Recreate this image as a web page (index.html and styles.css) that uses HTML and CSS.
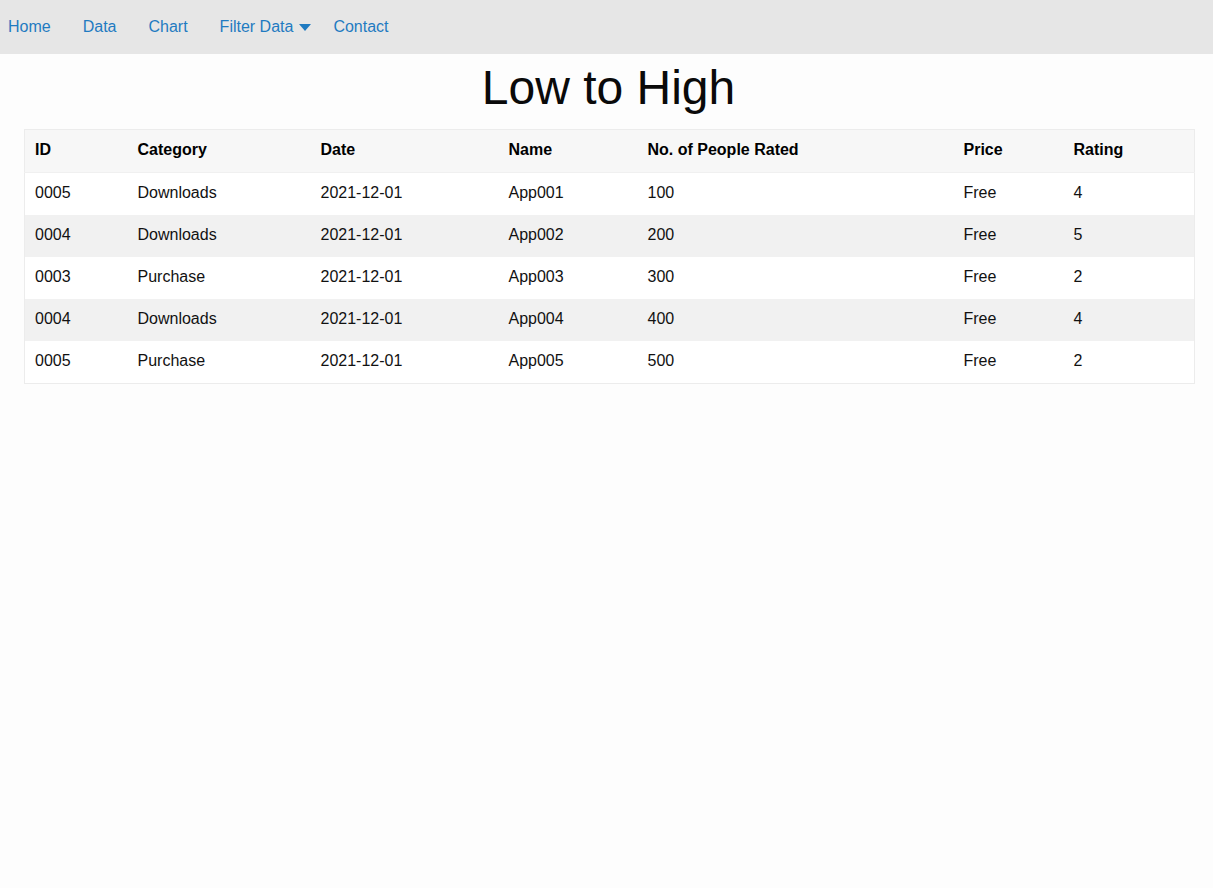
FILE: index.html
```html
<!DOCTYPE html>
<html>
<head>
<meta charset="utf-8">
<link rel="stylesheet" href="styles.css">
</head>
<body>
<nav class="nav">
  <a href="#">Home</a>
  <a href="#">Data</a>
  <a href="#">Chart</a>
  <a href="#" class="dropdown">Filter Data <span class="caret"></span></a>
  <a href="#">Contact</a>
</nav>
<h1 class="title">Low to High</h1>
<div class="wrap">
<table class="data">
  <colgroup>
    <col style="width:103px"><col style="width:183px"><col style="width:188px"><col style="width:139px"><col style="width:316px"><col style="width:110px"><col style="width:131px">
  </colgroup>
  <thead>
    <tr><th>ID</th><th>Category</th><th>Date</th><th>Name</th><th>No. of People Rated</th><th>Price</th><th>Rating</th></tr>
  </thead>
  <tbody>
    <tr><td>0005</td><td>Downloads</td><td>2021-12-01</td><td>App001</td><td>100</td><td>Free</td><td>4</td></tr>
    <tr><td>0004</td><td>Downloads</td><td>2021-12-01</td><td>App002</td><td>200</td><td>Free</td><td>5</td></tr>
    <tr><td>0003</td><td>Purchase</td><td>2021-12-01</td><td>App003</td><td>300</td><td>Free</td><td>2</td></tr>
    <tr><td>0004</td><td>Downloads</td><td>2021-12-01</td><td>App004</td><td>400</td><td>Free</td><td>4</td></tr>
    <tr><td>0005</td><td>Purchase</td><td>2021-12-01</td><td>App005</td><td>500</td><td>Free</td><td>2</td></tr>
  </tbody>
</table>
</div>
</body>
</html>
```
FILE: styles.css
```css
html, body {
  margin: 0;
  padding: 0;
  background: #fdfdfd;
  font-family: "Liberation Sans", Arial, sans-serif;
  color: #111;
}
.nav {
  height: 54px;
  background: #e6e6e6;
  display: flex;
  align-items: center;
  padding-left: 8px;
  gap: 32px;
}
.nav a {
  color: #1f7bc1;
  text-decoration: none;
  font-size: 16px;
  line-height: 18px;
  display: flex;
  align-items: center;
}
.nav a.dropdown {
  margin-right: -10px;
}
.caret {
  display: inline-block;
  width: 0;
  height: 0;
  margin-left: 6px;
  border-left: 6px solid transparent;
  border-right: 6px solid transparent;
  border-top: 7px solid #1f7bc1;
}
.title {
  margin: 6px 0 14px;
  padding-left: 4px;
  text-align: center;
  font-size: 48px;
  font-weight: normal;
  line-height: 55px;
  color: #0a0a0a;
}
.wrap {
  padding: 0 19px 0 24px;
}
.data {
  width: 1170px;
  border-collapse: collapse;
  table-layout: fixed;
  border: 1px solid #ececec;
  font-size: 16px;
}
.data th, .data td {
  text-align: left;
  padding: 11px 10px 13px;
  line-height: 18px;
}
.data th {
  font-weight: bold;
  background: #f7f7f7;
  color: #000;
}
.data tbody tr:nth-child(odd) td {
  background: #ffffff;
}
.data tbody tr:nth-child(even) td {
  background: #f1f1f1;
}
.data thead tr {
  border-bottom: 1px solid #f0f0f0;
}
```
